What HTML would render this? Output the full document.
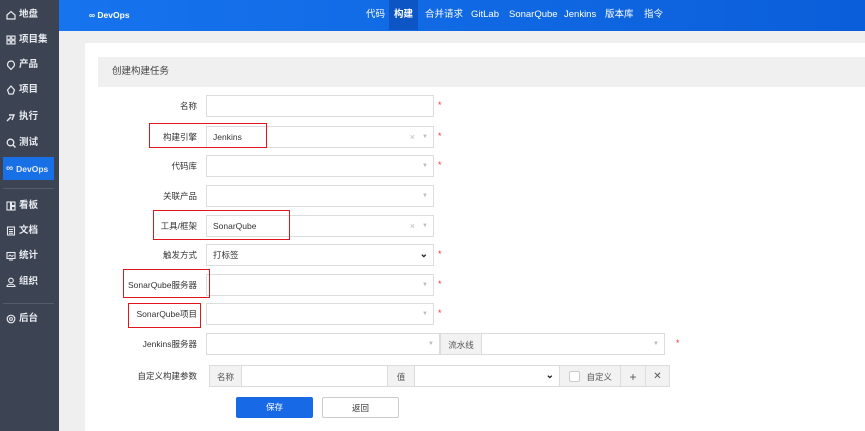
<!DOCTYPE html>
<html style="overflow:hidden;width:865px;height:431px"><head><meta charset="utf-8"><style>
*{box-sizing:border-box;margin:0;padding:0}
body{width:865px;height:431px;overflow:hidden;background:#efefef;font-family:"Liberation Sans","Noto Sans CJK SC",sans-serif;font-size:9px;color:#333;position:relative}
.side{position:absolute;left:0;top:0;width:59px;height:431px;background:#3c4353}
.si{position:absolute;left:6px;color:#e8ebf0;font-size:9.5px;font-weight:bold;height:14px;line-height:14px;display:flex;align-items:center;gap:3px}
.si svg{width:10px;height:10px}
.act{position:absolute;left:3px;top:157px;width:51px;height:23px;background:#1770e6}
.dv{position:absolute;left:3px;width:51px;height:1px;background:#545b6b}
.top{position:absolute;left:59px;top:0;width:806px;height:31px;background:linear-gradient(90deg,#1674ee,#0b5ed9)}
.nav{position:absolute;top:0;height:30px;line-height:30px;color:#fff;font-size:9.5px}
.card{position:absolute;left:85px;top:43px;width:780px;height:388px;background:#fff}
.ph{position:absolute;left:98px;top:57px;width:767px;height:30px;background:#f0f0f0;line-height:30px;padding-left:14px;font-size:9.5px;color:#444}
.lb{position:absolute;right:668px;font-size:8.5px;color:#333;text-align:right;height:22px;line-height:22px}
.in{position:absolute;left:206px;width:228px;height:22px;border:1px solid #dcdcdc;background:#fff;font-size:8.5px;line-height:20px;padding-left:6px}
.ar{position:absolute;right:5px;top:0;color:#bbb;font-size:6px}
.x{position:absolute;right:18px;top:0;color:#bbb;font-size:9px}
.st{position:absolute;left:438px;color:#e33;font-size:9px}
.rb{position:absolute;border:1.5px solid #e0161c}
.ad{position:absolute;background:#f2f2f2;border:1px solid #dcdcdc;font-size:8.5px;line-height:22px;text-align:center;color:#555}
.btn{position:absolute;top:397px;height:21px;line-height:21px;text-align:center;font-size:8.5px;border-radius:2px}
</style></head><body>
<div class="side">
<div class="act"></div>
<div class="si" style="top:8px"><svg viewBox="0 0 10 10"><path d="M1 5L5 1.5 9 5V9H1Z" fill="none" stroke="#e8ebf0" stroke-width="1.2"/></svg>地盘</div>
<div class="si" style="top:33px"><svg viewBox="0 0 10 10"><g fill="none" stroke="#e8ebf0" stroke-width="1.1"><rect x="1" y="1" width="3.3" height="3.3"/><rect x="5.7" y="1" width="3.3" height="3.3"/><rect x="1" y="5.7" width="3.3" height="3.3"/><rect x="5.7" y="5.7" width="3.3" height="3.3"/></g></svg>项目集</div>
<div class="si" style="top:58px"><svg viewBox="0 0 10 10"><path d="M5 1a3.5 3.5 0 0 1 2 6.3L5 9.5 3 7.3A3.5 3.5 0 0 1 5 1z" fill="none" stroke="#e8ebf0" stroke-width="1.2"/></svg>产品</div>
<div class="si" style="top:83px"><svg viewBox="0 0 10 10"><path d="M5 1L8.5 5 7 9H3L1.5 5Z" fill="none" stroke="#e8ebf0" stroke-width="1.2"/></svg>项目</div>
<div class="si" style="top:110px"><svg viewBox="0 0 10 10"><path d="M1 9L5 5M3 3H8L6 8" fill="none" stroke="#e8ebf0" stroke-width="1.4"/></svg>执行</div>
<div class="si" style="top:136px"><svg viewBox="0 0 10 10"><circle cx="4.5" cy="4.5" r="3.3" fill="none" stroke="#e8ebf0" stroke-width="1.3"/><path d="M7 7L9.5 9.5" stroke="#e8ebf0" stroke-width="1.4"/></svg>测试</div>
<div class="si" style="top:162px;font-size:8.5px"><span style="font-size:10px">∞</span> DevOps</div>
<div class="dv" style="top:188px"></div>
<div class="si" style="top:199px"><svg viewBox="0 0 10 10"><g fill="none" stroke="#e8ebf0" stroke-width="1.1"><rect x="1" y="1" width="3.5" height="8"/><rect x="5.5" y="1" width="3.5" height="3.5"/><rect x="5.5" y="5.5" width="3.5" height="3.5"/></g></svg>看板</div>
<div class="si" style="top:224px"><svg viewBox="0 0 10 10"><rect x="1.5" y="1" width="7" height="8" fill="none" stroke="#e8ebf0" stroke-width="1.1"/><path d="M3 3.5H7M3 5.5H7M3 7.3H7" stroke="#e8ebf0"/></svg>文档</div>
<div class="si" style="top:249px"><svg viewBox="0 0 10 10"><rect x="1" y="1.5" width="8" height="6" fill="none" stroke="#e8ebf0" stroke-width="1.1"/><path d="M2.5 5.5L4 4 6 5.5 7.5 4M3 9H7" fill="none" stroke="#e8ebf0"/></svg>统计</div>
<div class="si" style="top:275px"><svg viewBox="0 0 10 10"><circle cx="5" cy="3.5" r="2.3" fill="none" stroke="#e8ebf0" stroke-width="1.1"/><path d="M1 9.5C1 6.5 9 6.5 9 9.5Z" fill="none" stroke="#e8ebf0" stroke-width="1.1"/></svg>组织</div>
<div class="dv" style="top:303px"></div>
<div class="si" style="top:312px"><svg viewBox="0 0 10 10"><circle cx="5" cy="5" r="3.8" fill="none" stroke="#e8ebf0" stroke-width="1.2"/><circle cx="5" cy="5" r="1.4" fill="none" stroke="#e8ebf0"/></svg>后台</div>
</div>
<div class="top">
<div class="nav" style="left:30px;font-size:8.5px;font-weight:bold">∞ DevOps</div>
<div class="nav" style="left:307px">代码</div>
<div class="nav" style="left:330px;width:29px;background:#0d55c4;text-align:center;font-weight:bold">构建</div>
<div class="nav" style="left:366px">合并请求</div>
<div class="nav" style="left:412px">GitLab</div>
<div class="nav" style="left:450px">SonarQube</div>
<div class="nav" style="left:505px">Jenkins</div>
<div class="nav" style="left:546px">版本库</div>
<div class="nav" style="left:585px">指令</div>
</div>
<div class="card"></div>
<div class="ph">创建构建任务</div>

<div class="lb" style="top:95px">名称</div><div class="in" style="top:95px"></div><div class="st" style="top:100px">*</div>
<div class="lb" style="top:126px">构建引擎</div><div class="in" style="top:126px">Jenkins<span class="x">×</span><span class="ar">▼</span></div><div class="st" style="top:131px">*</div>
<div class="lb" style="top:155px">代码库</div><div class="in" style="top:155px"><span class="ar">▼</span></div><div class="st" style="top:160px">*</div>
<div class="lb" style="top:185px">关联产品</div><div class="in" style="top:185px"><span class="ar">▼</span></div>
<div class="lb" style="top:215px">工具/框架</div><div class="in" style="top:215px">SonarQube<span class="x">×</span><span class="ar">▼</span></div>
<div class="lb" style="top:244px">触发方式</div><div class="in" style="top:244px">打标签<span class="ar" style="color:#222;font-size:10px;font-weight:bold">⌄</span></div><div class="st" style="top:249px">*</div>
<div class="lb" style="top:274px">SonarQube服务器</div><div class="in" style="top:274px"><span class="ar">▼</span></div><div class="st" style="top:279px">*</div>
<div class="lb" style="top:303px">SonarQube项目</div><div class="in" style="top:303px"><span class="ar">▼</span></div><div class="st" style="top:308px">*</div>
<div class="lb" style="top:333px">Jenkins服务器</div><div class="in" style="top:333px;width:234px"><span class="ar">▼</span></div>
<div class="ad" style="left:440px;top:333px;width:42px;height:22px">流水线</div>
<div class="in" style="top:333px;left:481px;width:184px"><span class="ar">▼</span></div><div class="st" style="top:338px;left:676px">*</div>
<div class="lb" style="top:365px">自定义构建参数</div>
<div class="ad" style="left:209px;top:365px;width:33px;height:22px">名称</div>
<div class="in" style="left:241px;top:365px;width:147px"></div>
<div class="ad" style="left:387px;top:365px;width:28px;height:22px">值</div>
<div class="in" style="left:414px;top:365px;width:146px"><span class="ar" style="color:#222;font-size:10px;font-weight:bold">⌄</span></div>
<div class="ad" style="left:559px;top:365px;width:62px;height:22px;text-align:right;padding-right:8px">自定义<span style="position:absolute;left:9px;top:5px;width:11px;height:11px;border:1px solid #ccc;background:#fff;border-radius:2px"></span></div>
<div class="ad" style="left:620px;top:365px;width:26px;height:22px;font-size:12px">+</div>
<div class="ad" style="left:645px;top:365px;width:25px;height:22px;font-size:10px">✕</div>
<div class="btn" style="left:236px;width:77px;background:#1769e6;color:#fff">保存</div>
<div class="btn" style="left:322px;width:77px;border:1px solid #ccc;background:#fff">返回</div>

<div class="rb" style="left:149px;top:123px;width:118px;height:25px"></div>
<div class="rb" style="left:153px;top:210px;width:137px;height:30px"></div>
<div class="rb" style="left:123px;top:269px;width:87px;height:29px"></div>
<div class="rb" style="left:128px;top:303px;width:73px;height:25px"></div>
</body></html>
